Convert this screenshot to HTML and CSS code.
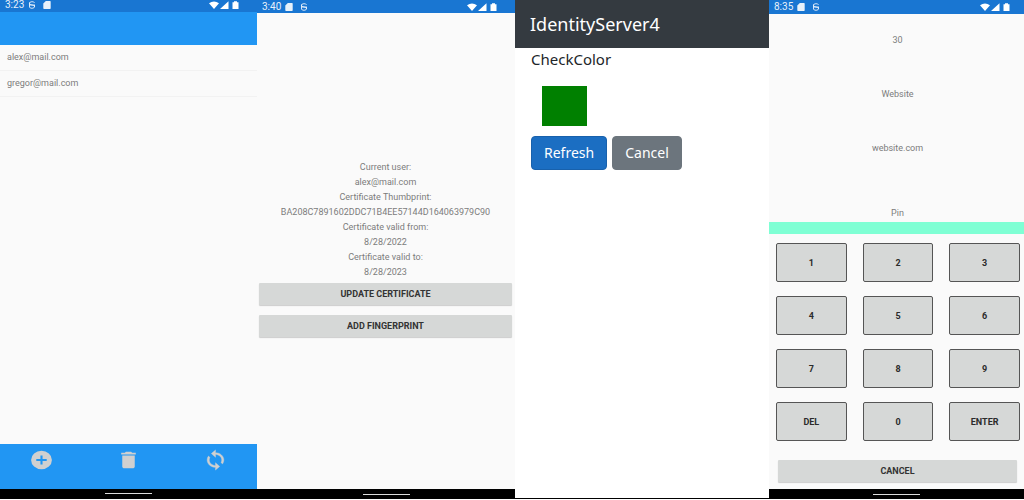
FILE: index.html
```html
<!DOCTYPE html>
<html lang="en">
<head>
<meta charset="utf-8">
<title>IdentityServer4</title>
<link rel="stylesheet" href="styles.css">
</head>
<body>
<svg class="defs" aria-hidden="true">
  <symbol id="debug" viewBox="0 0 8 8"><path d="M6.500 1.800Q6.300.7 4 .7 1.500.7 1.500 2.300q0 1.500 2.500 1.700 2.500.2 2.500 1.700T4 7.300Q1.700 7.300 1.500 6M1 4h6M1.500 1.500v4.500M6.500 4v2" fill="none" stroke="currentColor" stroke-width=".9"/></symbol>
  <symbol id="card" viewBox="0 0 8 8"><path d="M2.800 0H7q.7 0 .7.7v6.600q0 .7-.7.7H1q-.7 0-.7-.7V2.500z" fill="currentColor"/></symbol>
  <symbol id="signals" viewBox="0 0 30 8"><path d="M0 2.200Q5-1.400 10 2.200L5 8zM19.500.2V8H11zM23.500 1.200h1.500V.3h3v.9h1.500V8h-6z" fill="currentColor"/></symbol>
</svg>
<div class="screens">
  <section class="phone">
    <header class="status short"><span>3:23</span><svg class="glyph"><use href="#debug"/></svg><svg class="glyph last"><use href="#card"/></svg><svg class="signals"><use href="#signals"/></svg></header>
    <div class="toolbar"></div>
    <ul class="users">
      <li>alex@mail.com</li>
      <li>gregor@mail.com</li>
    </ul>
    <div class="actions">
      <button aria-label="Add"><svg viewBox="0 0 24 24" preserveAspectRatio="none"><path d="M12 2a10 10 0 1 0 0 20 10 10 0 0 0 0-20zm5 11h-4v4h-2v-4H7v-2h4V7h2v4h4z"/></svg></button>
      <button aria-label="Delete"><svg viewBox="0 0 24 24" preserveAspectRatio="none"><path d="M6 19c0 1.100.9 2 2 2h8c1.100 0 2-.9 2-2V7H6zM19 4h-3.500l-1-1h-5l-1 1H5v2h14z"/></svg></button>
      <button aria-label="Sync"><svg class="bold" viewBox="0 0 24 24" preserveAspectRatio="none"><path d="M12 4V1L8 5l4 4V6c3.310 0 6 2.690 6 6 0 1.010-.25 1.970-.7 2.800l1.460 1.460A7.930 7.930 0 0 0 20 12c0-4.420-3.580-8-8-8zm0 14c-3.310 0-6-2.690-6-6 0-1.010.25-1.970.7-2.800L5.240 7.740A7.930 7.930 0 0 0 4 12c0 4.420 3.580 8 8 8v3l4-4-4-4z"/></svg></button>
    </div>
    <footer class="nav"></footer>
  </section>

  <section class="phone">
    <header class="status"><span>3:40</span><svg class="glyph"><use href="#card"/></svg><svg class="glyph last"><use href="#debug"/></svg><svg class="signals"><use href="#signals"/></svg></header>
    <div class="certificate">
      <p>Current user:</p>
      <p>alex@mail.com</p>
      <p>Certificate Thumbprint:</p>
      <p>BA208C7891602DDC71B4EE57144D164063979C90</p>
      <p>Certificate valid from:</p>
      <p>8/28/2022</p>
      <p>Certificate valid to:</p>
      <p>8/28/2023</p>
      <div class="stack">
        <button class="flat">UPDATE CERTIFICATE</button>
        <button class="flat">ADD FINGERPRINT</button>
      </div>
    </div>
    <footer class="nav low"></footer>
  </section>

  <section class="web">
    <header class="brand">IdentityServer4</header>
    <main class="check">
      <p>CheckColor</p>
      <div class="swatch"></div>
      <div class="buttons">
        <button class="btn primary">Refresh</button>
        <button class="btn">Cancel</button>
      </div>
    </main>
  </section>

  <section class="phone">
    <header class="status tall"><span>8:35</span><svg class="glyph"><use href="#card"/></svg><svg class="glyph last"><use href="#debug"/></svg><svg class="signals"><use href="#signals"/></svg></header>
    <div class="login">
      <div class="info">
        <p>30</p>
        <p>Website</p>
        <p>website.com</p>
      </div>
      <p class="pin">Pin</p>
      <div class="entry"></div>
      <div class="keys">
        <button>1</button><button>2</button><button>3</button>
        <button>4</button><button>5</button><button>6</button>
        <button>7</button><button>8</button><button>9</button>
        <button>DEL</button><button>0</button><button>ENTER</button>
      </div>
      <div class="cancel"><button class="flat">CANCEL</button></div>
    </div>
    <footer class="nav low"></footer>
  </section>
</div>
</body>
</html>
```
FILE: styles.css
```css
* { box-sizing: border-box; }
body { margin: 0; background: #fff; font-family: Roboto, sans-serif; }
p, ul { margin: 0; padding: 0; }
button { font-family: inherit; border: 0; padding: 0; }
.defs { display: none; }

.screens {
  display: grid;
  grid-template-columns: 257fr 258fr 254fr 255fr;
  min-height: calc(100vh - 1px);
  border-bottom: 1px solid #000;
}
.phone {
  display: flex;
  flex-direction: column;
  min-width: 0;
  background: #fafafa;
  color: #7c7c7c;
  font-size: 9px;
  line-height: 15px;
}

.status {
  display: flex;
  align-items: center;
  height: 13px;
  padding: 0 18px 0 5px;
  background: #1976d2;
  color: #e8f1fa;
  font-size: 10px;
  line-height: 12px;
}
.status.short { height: 12px; padding-bottom: 2px; }
.status.tall { height: 14px; padding-right: 14px; }
.glyph { width: 8px; height: 8px; margin-left: 4px; }
.glyph.last { margin: 0 auto 0 7px; }
.signals { width: 30px; height: 8px; color: #fff; }

.nav {
  display: flex;
  justify-content: center;
  align-items: center;
  height: 9px;
  background: #000;
}
.nav.low { padding-top: 2px; }
.nav::before {
  content: "";
  width: 47px;
  height: 1px;
  background: #ddd;
}

.toolbar { height: 33px; background: #2196f3; }
.users { flex: 1; list-style: none; }
.users li {
  height: 26px;
  padding-left: 7px;
  border-bottom: 1px solid #f2f2f2;
  line-height: 24px;
}
.actions {
  display: flex;
  justify-content: space-between;
  align-items: flex-start;
  height: 45px;
  padding: 5px 29px;
  background: #2196f3;
}
.actions button { background: none; }
.actions svg { display: block; width: 25px; height: 22px; fill: #d0d0d0; }
.actions .bold { stroke: #d0d0d0; stroke-width: .4; }

.certificate {
  flex: 1;
  display: flex;
  flex-direction: column;
  justify-content: center;
  padding: 0 3px 6px 2px;
  text-align: center;
}
.stack { display: grid; gap: 10px; margin-top: 3px; }
.flat {
  width: 100%;
  height: 22px;
  border-radius: 1px;
  background: #d6d8d7;
  box-shadow: 0 1px 1px #ccc;
  color: #333;
  font-size: 9px;
  font-weight: 700;
}

.web {
  background: #fff;
  color: #212529;
  font-family: "Noto Sans", sans-serif;
}
.brand {
  height: 48px;
  padding-left: 15px;
  background: #343a40;
  color: #fff;
  font-size: 18px;
  line-height: 48px;
}
.check { padding-left: 16px; font-size: 15px; line-height: 22px; }
.swatch {
  width: 45px;
  height: 40px;
  margin: 16px 0 10px 11px;
  background: #008000;
}
.buttons { display: flex; gap: 5px; }
.btn {
  height: 34px;
  padding: 0 12px 1px;
  border: 1px solid #6c757d;
  border-radius: 4px;
  background: #6c757d;
  color: #fff;
  font-size: 14px;
}
.btn.primary { border-color: #1861ac; background: #1b6ec2; }

.login { flex: 1; text-align: center; line-height: 14px; }
.info { display: grid; gap: 40px; padding: 19px 0 0 2px; }
.pin { margin-top: 51px; padding-left: 2px; }
.entry { height: 12px; margin-top: 2px; background: #7fffd4; }
.keys {
  display: grid;
  grid-template-columns: repeat(3, 1fr);
  gap: 14px 16px;
  padding: 9px 4px 0 7px;
}
.keys button {
  height: 39px;
  border: 1px solid #555;
  border-radius: 2px;
  background: #d6d8d7;
  color: #2b2b2b;
  font-size: 9px;
  font-weight: 700;
}
.cancel { padding: 19px 7px 0 9px; }
```
